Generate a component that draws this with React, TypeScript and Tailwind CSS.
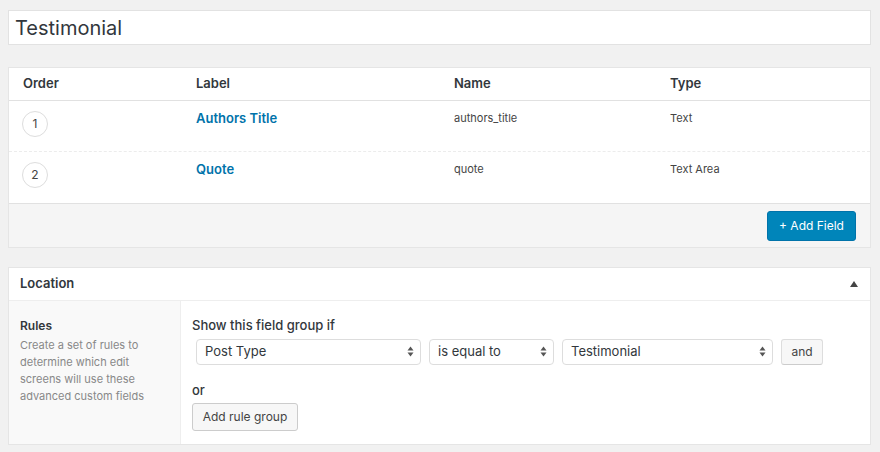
import React from "react";

const font = { fontFamily: "Inter, 'Noto Sans', 'Liberation Sans', sans-serif" };

function Arrows() {
  return (
    <svg width="7" height="11" viewBox="0 0 7 11" className="shrink-0">
      <path d="M3.5 0.5 L6.5 4.5 L0.5 4.5 Z" fill="#555" />
      <path d="M3.5 10.5 L6.5 6.5 L0.5 6.5 Z" fill="#555" />
    </svg>
  );
}

function Select({ label, w }: { label: string; w: string }) {
  return (
    <div className={`${w} h-[26px] flex items-center justify-between pl-[8px] pr-[6px] bg-white border border-[#ddd] rounded-[4px] text-[13px] text-[#32373c]`}>
      <span>{label}</span>
      <Arrows />
    </div>
  );
}

export default function App() {
  const rows = [
    { n: 1, label: "Authors Title", name: "authors_title", type: "Text" },
    { n: 2, label: "Quote", name: "quote", type: "Text Area" },
  ];
  return (
    <div className="w-[880px] h-[452px] bg-[#f1f1f1] pt-[10px] px-[8px] text-[#32373c]" style={font}>
      <div className="w-[863px] h-[35px] bg-white border border-[#e2e2e2] flex items-center pl-[6px] text-[20px] text-[#32373c]">
        Testimonial
      </div>

      <div className="mt-[22px] w-[863px] bg-white border border-[#e5e5e5]">
        <div className="h-[33px] flex items-center text-[13px] font-semibold text-[#32373c] border-b border-[#e1e1e1]">
          <div className="w-[187px] pl-[14px]">Order</div>
          <div className="w-[258px]">Label</div>
          <div className="w-[216px]">Name</div>
          <div>Type</div>
        </div>
        {rows.map((r, i) => (
          <div key={r.n} className={`h-[51px] flex items-start ${i === 0 ? "border-b border-dashed border-[#ececec]" : ""}`}>
            <div className="w-[187px] pl-[13px] pt-[10px]">
              <div className="w-[26px] h-[26px] rounded-full border border-[#ddd] flex items-center justify-center text-[12px] text-[#444]">
                {r.n}
              </div>
            </div>
            <div className="w-[258px] pt-[8px] text-[13px] font-semibold text-[#0073aa]">{r.label}</div>
            <div className="w-[216px] pt-[9px] text-[11px] text-[#444]">{r.name}</div>
            <div className="pt-[9px] text-[11px] text-[#444]">{r.type}</div>
          </div>
        ))}
        <div className="h-[44px] bg-[#f5f5f5] border-t border-[#e1e1e1] flex items-center justify-end pr-[14px]">
          <div className="w-[89px] h-[30px] rounded-[3px] bg-[#0085ba] border border-[#0073aa] flex items-center justify-center text-[12px] text-white">
            + Add Field
          </div>
        </div>
      </div>

      <div className="mt-[19px] w-[863px] bg-white border border-[#e5e5e5]">
        <div className="h-[33px] flex items-center justify-between pl-[11px] pr-[12px] border-b border-[#eee] text-[13px] font-semibold text-[#32373c]">
          <span>Location</span>
          <svg width="8" height="6" viewBox="0 0 8 6"><path d="M4 0 L8 6 L0 6 Z" fill="#444" /></svg>
        </div>
        <div className="flex h-[143px]">
          <div className="w-[172px] bg-[#f9f9f9] border-r border-[#eee] pl-[11px] pr-[24px] pt-[16px]">
            <div className="text-[12px] font-semibold text-[#32373c]">Rules</div>
            <div className="text-[11px] leading-[17px] text-[#888] mt-[2px]">
              Create a set of rules to determine which edit screens will use these advanced custom fields
            </div>
          </div>
          <div className="flex-1 pl-[11px] pt-[15px]">
            <div className="text-[13px] font-medium text-[#32373c]">Show this field group if</div>
            <div className="flex items-center mt-[3px] pl-[4px]">
              <Select label="Post Type" w="w-[225px]" />
              <div className="ml-[8px]"><Select label="is equal to" w="w-[125px]" /></div>
              <div className="ml-[8px]"><Select label="Testimonial" w="w-[211px]" /></div>
              <div className="ml-[8px] w-[42px] h-[26px] rounded-[3px] bg-[#f7f7f7] border border-[#ddd] border-b-[#ccc] flex items-center justify-center text-[12px] text-[#444]">
                and
              </div>
            </div>
            <div className="mt-[16px] text-[13px] font-medium text-[#32373c]">or</div>
            <div className="mt-[3px] w-[106px] h-[28px] rounded-[3px] bg-[#f7f7f7] border border-[#ccc] flex items-center justify-center text-[12px] text-[#444]">
              Add rule group
            </div>
          </div>
        </div>
      </div>
    </div>
  );
}
